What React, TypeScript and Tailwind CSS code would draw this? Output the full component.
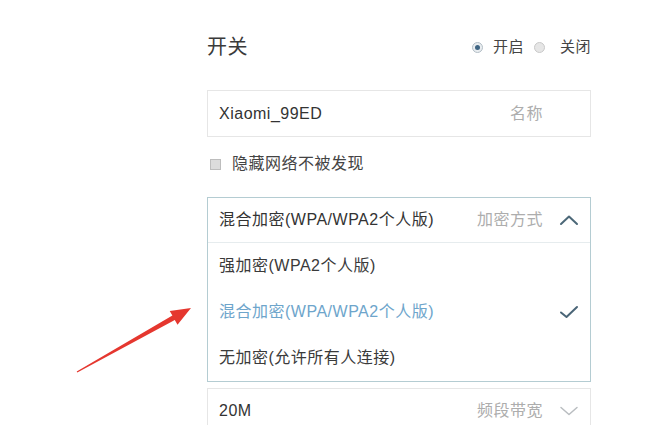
import React from 'react'

const font = { fontFamily: '"Liberation Sans", "Noto Sans CJK SC", sans-serif' }

function Radio({ checked }: { checked: boolean }) {
  return (
    <span
      className={`inline-flex h-[11px] w-[11px] items-center justify-center rounded-full border ${
        checked ? 'border-[#b3bec6] bg-[#e9edf0]' : 'border-[#c9c9c9] bg-[#e6e6e6]'
      }`}
    >
      {checked && <span className="h-[5px] w-[5px] rounded-full bg-[#3f6583]" />}
    </span>
  )
}

function ChevronUp() {
  return (
    <svg width="20" height="12" viewBox="0 0 20 12" fill="none">
      <path d="M2 10 L10 2.5 L18 10" stroke="#4c6878" strokeWidth="2" strokeLinecap="round" strokeLinejoin="round" />
    </svg>
  )
}

function ChevronDown() {
  return (
    <svg width="20" height="12" viewBox="0 0 20 12" fill="none">
      <path d="M2 2.5 L10 9.5 L18 2.5" stroke="#b9bdc0" strokeWidth="1.5" strokeLinecap="round" strokeLinejoin="round" />
    </svg>
  )
}

function Check() {
  return (
    <svg width="20" height="14" viewBox="0 0 20 14" fill="none">
      <path d="M2 7.5 L7.5 12 L18 2" stroke="#4a6577" strokeWidth="2" strokeLinecap="round" strokeLinejoin="round" />
    </svg>
  )
}

// 右侧灰色标签 + 图标槽
function RightSide({ label, icon }: { label: string; icon?: React.ReactNode }) {
  return (
    <div className="flex items-center">
      <span className="text-[#adadad]">{label}</span>
      <span className="ml-[13px] flex w-[26px] items-center justify-center">{icon}</span>
    </div>
  )
}

const options = [
  { label: '强加密(WPA2个人版)', active: false },
  { label: '混合加密(WPA/WPA2个人版)', active: true },
  { label: '无加密(允许所有人连接)', active: false },
]

export default function App() {
  return (
    <div className="relative h-[425px] w-[650px] overflow-hidden bg-white" style={font}>
      <div className="ml-[207px] w-[384px] pt-[36px] text-[16px] tracking-[0.5px] text-[#333]">
        {/* 开关 */}
        <div className="flex h-[22px] items-center justify-between">
          <span className="text-[20px] text-[#3a3a3a]">开关</span>
          <div className="flex items-center text-[15px] text-[#444]">
            <Radio checked />
            <span className="ml-[10px]">开启</span>
            <span className="ml-[10px] flex"><Radio checked={false} /></span>
            <span className="ml-[15px]">关闭</span>
          </div>
        </div>

        {/* 名称 */}
        <div className="mt-[32px] flex h-[47px] items-center justify-between border border-[#e6e6e6] pl-[11px] pr-[8px]">
          <span>Xiaomi_99ED</span>
          <RightSide label="名称" />
        </div>

        {/* 隐藏网络 */}
        <div className="mt-[15px] flex h-[24px] items-center pl-[3px]">
          <span className="h-[11px] w-[11px] border border-[#bdbdbd] bg-[#dcdcdc]" />
          <span className="ml-[11px] text-[#444]">隐藏网络不被发现</span>
        </div>

        {/* 加密方式 下拉 */}
        <div className="mt-[21px] border border-[#b4ccd2]">
          <div className="flex h-[45px] items-center justify-between border-b border-[#e6ecee] pl-[11px] pr-[8px]">
            <span>混合加密(WPA/WPA2个人版)</span>
            <RightSide label="加密方式" icon={<ChevronUp />} />
          </div>
          {options.map(o => (
            <div key={o.label} className="flex h-[46px] items-center justify-between pl-[11px] pr-[8px]">
              <span className={o.active ? 'text-[#6ea5cb]' : 'text-[#3a3a3a]'}>{o.label}</span>
              <span className="flex w-[26px] items-center justify-center">{o.active && <Check />}</span>
            </div>
          ))}
        </div>

        {/* 频段带宽 */}
        <div className="mt-[6px] flex h-[46px] items-center justify-between border border-[#e6e6e6] pl-[11px] pr-[8px]">
          <span>20M</span>
          <RightSide label="频段带宽" icon={<ChevronDown />} />
        </div>
      </div>

      {/* 红色箭头 */}
      <svg className="absolute left-0 top-0" width="650" height="425" viewBox="0 0 650 425">
        <polygon
          points="76.7,371.4 172.4,315.6 169.7,310.9 191,308 177.5,324.8 174.8,320 77.3,372.6"
          fill="#e5372f"
        />
      </svg>
    </div>
  )
}
